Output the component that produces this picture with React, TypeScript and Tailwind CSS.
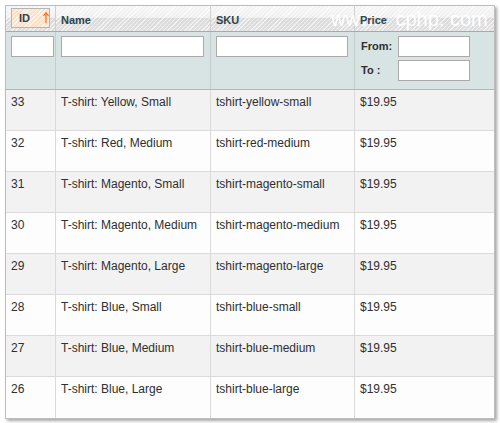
// Product grid with sortable header, filter row and striped rows.

const rows = [
  { id: 33, name: "T-shirt: Yellow, Small", sku: "tshirt-yellow-small", price: "$19.95" },
  { id: 32, name: "T-shirt: Red, Medium", sku: "tshirt-red-medium", price: "$19.95" },
  { id: 31, name: "T-shirt: Magento, Small", sku: "tshirt-magento-small", price: "$19.95" },
  { id: 30, name: "T-shirt: Magento, Medium", sku: "tshirt-magento-medium", price: "$19.95" },
  { id: 29, name: "T-shirt: Magento, Large", sku: "tshirt-magento-large", price: "$19.95" },
  { id: 28, name: "T-shirt: Blue, Small", sku: "tshirt-blue-small", price: "$19.95" },
  { id: 27, name: "T-shirt: Blue, Medium", sku: "tshirt-blue-medium", price: "$19.95" },
  { id: 26, name: "T-shirt: Blue, Large", sku: "tshirt-blue-large", price: "$19.95" },
];

const cols = "grid grid-cols-[50px_155px_144px_139px]";
const stripes =
  "bg-[repeating-linear-gradient(135deg,rgba(255,255,255,0.6)_0px,rgba(255,255,255,0.6)_1px,transparent_1px,transparent_3px)]";

export default function App() {
  return (
    <div className="h-[423px] w-[500px] bg-white p-[5px] font-['Liberation_Sans',Arial,sans-serif]">
      <div className="relative w-[490px] border border-[#bdbdbd] bg-white shadow-[2px_2px_3px_rgba(0,0,0,0.35)]">
        {/* header */}
        <div className={`${cols} h-[26px] border-b border-[#a9a9a9] bg-[linear-gradient(#f5f5f5_0%,#f0f0f0_45%,#dadada_50%,#e0e0e0_100%)]`}>
          <HeadCell>
            <div className={`mx-[5px] mt-[2px] flex h-[20px] items-center border border-[#b4b4b4] bg-[#fbe2cb] pl-[7px] ${stripes}`}>
              <span className="text-[11px] font-bold text-[#2d444f]">ID</span>
              <svg width="7" height="14" viewBox="0 0 7 14" className="ml-[13px]">
                <path d="M3.5 1 L3.5 13" stroke="#f26c1d" strokeWidth="1.4" />
                <path d="M0.5 4.5 L3.5 1 L6.5 4.5" stroke="#f26c1d" strokeWidth="1.4" fill="none" />
              </svg>
            </div>
          </HeadCell>
          <HeadCell label="Name" />
          <HeadCell label="SKU" />
          <HeadCell label="Price" last />
        </div>

        {/* filters */}
        <div className={`${cols} h-[58px] border-b border-[#b5b5b5] bg-[#d8e4e4]`}>
          <div className="border-r border-[#c4cccc] pl-[5px] pt-[4px]">
            <Input w="w-[43px]" />
          </div>
          <div className="border-r border-[#c4cccc] pl-[5px] pt-[4px]">
            <Input w="w-[143px]" />
          </div>
          <div className="border-r border-[#c4cccc] pl-[5px] pt-[4px]">
            <Input w="w-[132px]" />
          </div>
          <div className="flex flex-col gap-[3px] pl-[6px] pt-[4px]">
            <div className="flex items-center">
              <span className="w-[37px] text-[11px] font-bold text-[#2f2f2f]">From:</span>
              <Input w="w-[72px]" />
            </div>
            <div className="flex items-center">
              <span className="w-[37px] text-[11px] font-bold text-[#2f2f2f]">To :</span>
              <Input w="w-[72px]" />
            </div>
          </div>
        </div>

        {/* body */}
        {rows.map((r, i) => (
          <div
            key={r.id}
            className={`${cols} h-[41px] text-[12px] text-[#2f2f2f] ${
              i < rows.length - 1 ? "border-b border-[#dadada]" : ""
            } ${i % 2 === 0 ? "bg-[#f2f2f2]" : "bg-[#fcfdfc]"}`}
          >
            <Cell>{r.id}</Cell>
            <Cell>{r.name}</Cell>
            <Cell>{r.sku}</Cell>
            <Cell last>{r.price}</Cell>
          </div>
        ))}

        {/* watermark */}
        <span className="pointer-events-none absolute left-[325px] top-[2px] whitespace-nowrap text-[20px] leading-[22px] text-white">
          www.&nbsp;&nbsp;&nbsp;cphp.&nbsp;com
        </span>
      </div>
    </div>
  );
}

function HeadCell({
  label,
  last,
  children,
}: {
  label?: string;
  last?: boolean;
  children?: React.ReactNode;
}) {
  return (
    <div className={`relative ${last ? "" : "border-r border-[#d0d0d0]"} ${stripes}`}>
      {children ?? (
        <span className="absolute left-[5px] top-[6px] z-10 text-[11px] font-bold text-[#2d444f]">{label}</span>
      )}
    </div>
  );
}

function Input({ w }: { w: string }) {
  return <div className={`h-[21px] ${w} border border-[#aaaaaa] bg-white`} />;
}

function Cell({ children, last }: { children: React.ReactNode; last?: boolean }) {
  return (
    <div className={`pl-[5px] pt-[5px] leading-[14px] ${last ? "" : "border-r border-[#dadada]"}`}>
      {children}
    </div>
  );
}
